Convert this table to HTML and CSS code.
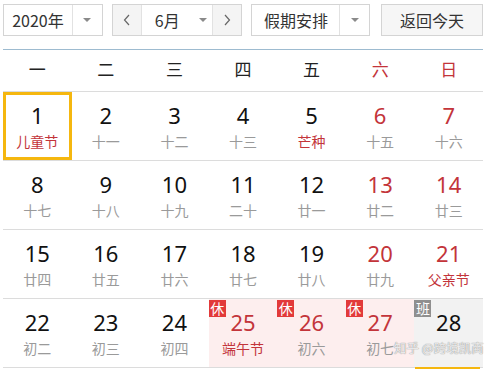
FILE: index.html
```html
<!DOCTYPE html>
<html lang="zh">
<head>
<meta charset="utf-8">
<link rel="stylesheet" href="styles.css">
</head>
<body>
<div class="cal">
  <div class="toolbar">
    <div class="select year"><span class="label">2020年</span><span class="drop"><i class="tri"></i></span></div>
    <div class="month-group">
      <span class="nav"><svg width="8" height="12" viewBox="0 0 8 12"><polyline points="6,1 1.5,6 6,11" fill="none" stroke="#666" stroke-width="1.2"/></svg></span>
      <span class="month"><span class="label">6月</span><i class="tri"></i></span>
      <span class="nav"><svg width="8" height="12" viewBox="0 0 8 12"><polyline points="2,1 6.5,6 2,11" fill="none" stroke="#666" stroke-width="1.2"/></svg></span>
    </div>
    <div class="select holiday"><span class="label">假期安排</span><span class="drop"><i class="tri"></i></span></div>
    <div class="btn">返回今天</div>
  </div>

  <div class="weekdays">
    <span>一</span><span>二</span><span>三</span><span>四</span><span>五</span><span class="we">六</span><span class="we">日</span>
  </div>

  <div class="row">
    <div class="cell today"><b>1</b><em class="fest">儿童节</em></div>
    <div class="cell"><b>2</b><em>十一</em></div>
    <div class="cell"><b>3</b><em>十二</em></div>
    <div class="cell"><b>4</b><em>十三</em></div>
    <div class="cell"><b>5</b><em class="fest">芒种</em></div>
    <div class="cell we"><b>6</b><em>十五</em></div>
    <div class="cell we"><b>7</b><em>十六</em></div>
  </div>
  <div class="row">
    <div class="cell"><b>8</b><em>十七</em></div>
    <div class="cell"><b>9</b><em>十八</em></div>
    <div class="cell"><b>10</b><em>十九</em></div>
    <div class="cell"><b>11</b><em>二十</em></div>
    <div class="cell"><b>12</b><em>廿一</em></div>
    <div class="cell we"><b>13</b><em>廿二</em></div>
    <div class="cell we"><b>14</b><em>廿三</em></div>
  </div>
  <div class="row">
    <div class="cell"><b>15</b><em>廿四</em></div>
    <div class="cell"><b>16</b><em>廿五</em></div>
    <div class="cell"><b>17</b><em>廿六</em></div>
    <div class="cell"><b>18</b><em>廿七</em></div>
    <div class="cell"><b>19</b><em>廿八</em></div>
    <div class="cell we"><b>20</b><em>廿九</em></div>
    <div class="cell we"><b>21</b><em class="fest">父亲节</em></div>
  </div>
  <div class="row">
    <div class="cell"><b>22</b><em>初二</em></div>
    <div class="cell"><b>23</b><em>初三</em></div>
    <div class="cell"><b>24</b><em>初四</em></div>
    <div class="cell rest"><span class="badge">休</span><b>25</b><em class="fest">端午节</em></div>
    <div class="cell rest"><span class="badge">休</span><b>26</b><em>初六</em></div>
    <div class="cell rest"><span class="badge">休</span><b>27</b><em>初七</em></div>
    <div class="cell work"><span class="badge">班</span><b>28</b></div>
  </div>
  <div class="row-edge">
    <span></span><span></span><span></span><span></span><span></span><span></span><span class="hover"></span>
  </div>

  <div class="watermark">知乎 @跨境凯商</div>
</div>
</body>
</html>
```

FILE: styles.css
```css
html, body {
  margin: 0;
  padding: 0;
  background: #fff;
  overflow: hidden;
}
body {
  font-family: "Noto Sans", "Noto Sans CJK SC", sans-serif;
  color: #111;
}
.cal {
  position: relative;
  width: 480px;
  padding: 4px 0 0 3px;
}
.toolbar {
  display: flex;
  height: 32px;
  font-size: 16px;
  color: #333;
}
.select, .month-group, .btn {
  box-sizing: border-box;
  height: 32px;
  border: 1px solid #d4d4d4;
  display: flex;
  align-items: stretch;
}
.year { width: 100px; }
.year .label { width: 68px; }
.select .label {
  display: flex;
  align-items: center;
  justify-content: center;
  font-family: "Noto Sans CJK SC", sans-serif;
}
.select .drop {
  flex: 1;
  border-left: 1px solid #e2e2e2;
  display: flex;
  align-items: center;
  justify-content: center;
}
.tri {
  display: inline-block;
  width: 0;
  height: 0;
  border-left: 4px solid transparent;
  border-right: 4px solid transparent;
  border-top: 4px solid #8a8a8a;
}
.month-group {
  margin-left: 9px;
  width: 131px;
}
.nav {
  width: 28px;
  background: #f4f4f4;
  display: flex;
  align-items: center;
  justify-content: center;
}
.nav:first-child { border-right: 1px solid #e2e2e2; }
.nav:last-child { border-left: 1px solid #e2e2e2; }
.month {
  flex: 1;
  display: flex;
  align-items: center;
  padding-left: 13px;
  gap: 19px;
  font-family: "Noto Sans CJK SC", sans-serif;
}
.holiday {
  margin-left: 9px;
  width: 119px;
}
.holiday .label { width: 87px; }
.btn {
  margin-left: 11px;
  width: 102px;
  background: #f6f6f6;
  align-items: center;
  justify-content: center;
  font-family: "Noto Sans CJK SC", sans-serif;
}
.weekdays {
  margin-top: 13px;
  border-top: 1px solid #9dbbd0;
  height: 41px;
  display: grid;
  grid-template-columns: repeat(7, 1fr);
  font-family: "Noto Sans CJK SC", sans-serif;
  font-size: 17px;
  line-height: 38px;
  text-align: center;
  color: #222;
}
.weekdays .we { color: #c3343a; }
.row {
  border-top: 1px solid #dcdcdc;
  height: 68px;
  display: grid;
  grid-template-columns: repeat(7, 1fr);
}
.cell {
  position: relative;
  box-sizing: border-box;
  height: 68px;
  padding-top: 10px;
  display: flex;
  flex-direction: column;
  align-items: center;
}
.cell b {
  font-weight: normal;
  font-size: 22px;
  line-height: 26px;
  color: #111;
}
.cell em {
  font-style: normal;
  font-family: "Noto Sans CJK SC", sans-serif;
  font-size: 14px;
  line-height: 18px;
  margin-top: 4px;
  color: #9a9a9a;
}
.cell.we b, .cell.rest b { color: #c3343a; }
.cell em.fest { color: #c3343a; }
.cell.today {
  border: 3px solid #f5b70f;
  padding-top: 7px;
}
.cell.rest { background: #fdeeee; }
.cell.work { background: #f2f2f2; }
.row-edge {
  border-top: 1px solid #dcdcdc;
  height: 2px;
  display: grid;
  grid-template-columns: repeat(7, 1fr);
}
.row-edge .hover {
  background: #f5b70f;
  margin: -1px 3px 0 1px;
}
.badge {
  position: absolute;
  left: 0;
  top: 1px;
  width: 17px;
  height: 17px;
  background: #e23a3a;
  color: #fff;
  font-family: "Noto Sans CJK SC", sans-serif;
  font-size: 14px;
  line-height: 17px;
  text-align: center;
}
.work .badge { background: #8f8f8f; }
.watermark {
  position: absolute;
  left: 394px;
  top: 339px;
  font-family: "Noto Sans CJK SC", sans-serif;
  font-size: 12.5px;
  line-height: 18px;
  color: rgba(255, 255, 255, 0.8);
  text-shadow: 0 0 1px #999, 0 0 1px #999;
  white-space: nowrap;
}
```
